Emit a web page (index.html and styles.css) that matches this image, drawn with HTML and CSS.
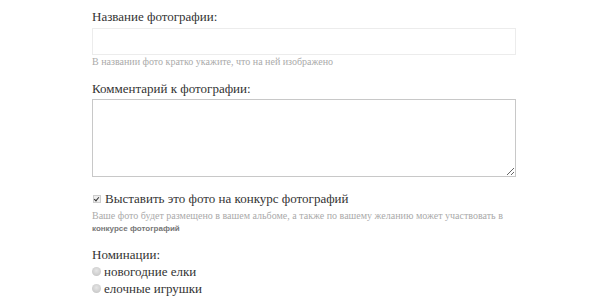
FILE: index.html
```html
<!DOCTYPE html>
<html lang="ru">
<head>
    <meta charset="UTF-8">
    <meta name="viewport" content="width=device-width, initial-scale=1.0">
    <title>Добавить фото</title>
    <link rel="stylesheet" href="styles.css">
</head>
<body>

    <form class="photo-form">
        <div class="field">
            <label class="field-label" for="title">Название фотографии:</label>
            <input class="text-input" type="text" id="title" name="title">
            <div class="hint">В названии фото кратко укажите, что на ней изображено</div>
        </div>

        <div class="field">
            <label class="field-label" for="comment">Комментарий к фотографии:</label>
            <textarea class="text-area" id="comment" name="comment"></textarea>
        </div>

        <div class="field field-tight">
            <label class="check-row">
                <input type="checkbox" name="contest" checked>
                <span>Выставить это фото на конкурс фотографий</span>
            </label>
            <div class="hint hint-wide">Ваше фото будет размещено в вашем альбоме, а также по вашему желанию может участвовать в <b>конкурсе фотографий</b></div>
        </div>

        <div class="field">
            <div class="field-label group-label">Номинации:</div>
            <label class="radio-row"><input type="radio" name="nom" value="1"><span>новогодние елки</span></label>
            <label class="radio-row"><input type="radio" name="nom" value="2"><span>елочные игрушки</span></label>
        </div>
    </form>

</body>
</html>
```

FILE: styles.css
```css
body {
    margin: 0;
    background: #fff;
    font-family: "Liberation Serif", "DejaVu Serif", serif;
    color: #333;
}

.photo-form {
    width: 424px;
    margin-left: 92px;
    padding-top: 9px;
}

.field {
    margin-bottom: 13px;
}

.field-tight {
    margin-bottom: 12px;
}

.field-label {
    display: block;
    font-size: 13px;
    line-height: 16px;
    margin-bottom: 3px;
}

.group-label {
    margin-bottom: 0;
}

.text-input {
    display: block;
    box-sizing: border-box;
    width: 424px;
    height: 27px;
    border: 1px solid #ececec;
    margin: 0;
}

.text-area {
    display: block;
    box-sizing: border-box;
    width: 424px;
    height: 78px;
    border: 1px solid #c8c8c8;
    margin: -1px 0 0;
    resize: vertical;
}

.hint {
    font-size: 10px;
    color: #aaa;
    line-height: 12px;
    margin-top: 1px;
}

.hint-wide {
    margin-top: 2px;
}

.hint b {
    font-family: "Liberation Sans", "DejaVu Sans", sans-serif;
    font-size: 8px;
    color: #777;
}

.check-row,
.radio-row {
    display: flex;
    align-items: center;
    font-size: 13px;
    color: #333;
}

.check-row {
    height: 18px;
    line-height: 18px;
}

.radio-row {
    height: 17px;
    line-height: 17px;
}

.check-row input {
    appearance: none;
    box-sizing: border-box;
    position: relative;
    width: 8px;
    height: 8px;
    margin: 0 4px 0 1px;
    border: 1px solid #ccc;
    background: #eee;
}

.check-row input:checked::before {
    content: "";
    position: absolute;
    left: 1px;
    top: 0;
    width: 2px;
    height: 4px;
    border: solid #333;
    border-width: 0 1.5px 1.5px 0;
    transform: rotate(40deg);
}

.radio-row input {
    appearance: none;
    width: 9px;
    height: 9px;
    margin: 0 3px 0 0;
    border-radius: 50%;
    background: radial-gradient(circle at 50% 40%, #e6e6e6 0, #cfcfcf 60%, #bdbdbd 100%);
}
```
